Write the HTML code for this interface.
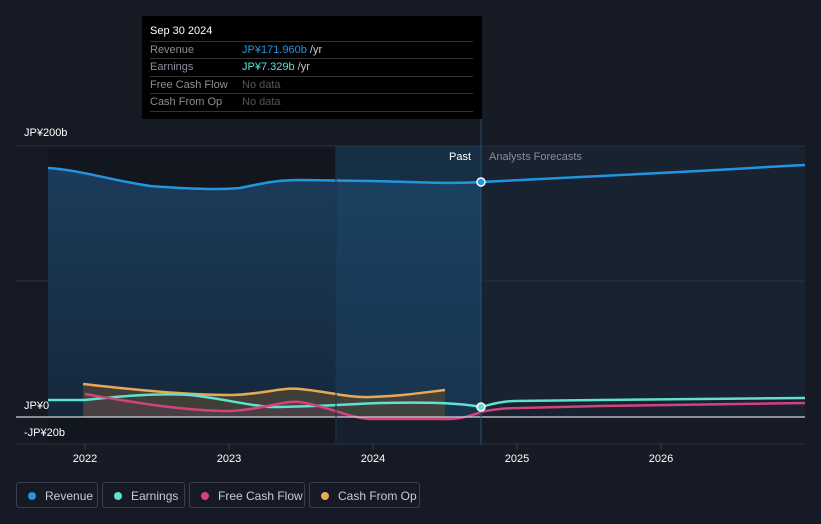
<!DOCTYPE html><html><head><meta charset="utf-8"><style>
body{margin:0;background:#151a24;font-family:"Liberation Sans",sans-serif;}
.w{position:relative;width:821px;height:524px;overflow:hidden;background:#151a24}
.tt{position:absolute;left:142px;top:16px;width:340px;height:103px;background:#000;font-size:11px;color:#8a8f98}
.tt .h{position:absolute;left:8px;top:9px;color:#fff;font-size:11px}
.tt .r{position:absolute;left:8px;width:323px;height:17px;border-top:1px solid #333;line-height:17px}
.tt .r span{position:absolute;left:92px}
.lg{position:absolute;top:482px;height:26px;border:1px solid #3a3f4a;border-radius:3px;color:#c8ccd3;font-size:12px;line-height:26px;box-sizing:border-box}
.lg i{position:absolute;left:11px;top:9px;width:8px;height:8px;border-radius:50%}
.lg b{font-weight:normal;position:absolute;left:28px}
</style></head><body><div class="w">
<svg width="821" height="524" style="position:absolute;left:0;top:0">
<defs><linearGradient id="g" x1="0" y1="0" x2="0" y2="1"><stop offset="0" stop-color="#1a3c5a"/><stop offset="1" stop-color="#16283b"/></linearGradient></defs>
<rect x="48" y="146" width="433" height="298" fill="#12171f"/>
<rect x="336" y="146" width="145" height="298" fill="#15202c"/>
<rect x="481" y="146" width="324" height="271" fill="#182230"/>
<line x1="16" y1="146" x2="805" y2="146" stroke="#2c3340"/>
<line x1="16" y1="281" x2="805" y2="281" stroke="#2c3340"/>
<line x1="16" y1="444" x2="805" y2="444" stroke="#2c3340"/>
<path d="M48,168 C80,170 110,180 150,186 C190,189 220,190 240,188 C260,184 275,180 300,180 L370,181 C420,182 450,184 481,182 L481,417 L48,417Z" fill="url(#g)"/>
<path d="M336,146 L481,146 L481,417 L336,417Z" fill="#1d4d74" opacity="0.35"/>
<path d="M83,384 C120,388 180,395 230,395 C260,395 280,387 300,389 C330,392 350,398 370,397 C400,396 420,393 445,390 L445,417 L83,417Z" fill="#4a4536" opacity="0.8"/>
<path d="M85,394 C120,400 180,411 230,411 C260,410 285,400 300,402 C330,407 350,418 370,419 L450,419 C460,419 470,416 481,412 L481,417 L85,417Z" fill="#4d3f4a" opacity="0.6"/>
<path d="M48,168 C80,170 110,180 150,186 C190,189 220,190 240,188 C260,184 275,180 300,180 L370,181 C420,182 450,184 481,182 C520,180 600,176 680,172 C740,169 780,166 805,165" fill="none" stroke="#2394e0" stroke-width="2.5"/>
<path d="M83,384 C120,388 180,395 230,395 C260,395 280,387 300,389 C330,392 350,398 370,397 C400,396 420,393 445,390" fill="none" stroke="#e8a85a" stroke-width="2.5"/>
<path d="M48,400 L85,400 C120,396 160,393 190,395 C220,398 245,405 270,407 C310,407 350,404 380,403 C430,402 460,403 481,407 C495,403 505,401 515,401 L600,400 L805,398" fill="none" stroke="#5fe0d0" stroke-width="2.5"/>
<path d="M85,394 C120,400 180,411 230,411 C260,410 285,400 300,402 C330,407 350,418 370,419 L450,419 C460,419 470,416 481,412 C495,409 505,408 520,408 L600,406 L805,403" fill="none" stroke="#d2437e" stroke-width="2.5"/>
<line x1="16" y1="417" x2="805" y2="417" stroke="#d0d3d8" stroke-width="1.2"/>
<line x1="481" y1="119" x2="481" y2="444" stroke="#2a5070"/>
<line x1="336" y1="146" x2="336" y2="444" stroke="#1e3347"/>
<circle cx="481" cy="182" r="4" fill="#2394e0" stroke="#fff" stroke-width="1.5"/>
<circle cx="481" cy="407" r="4" fill="#5fe0d0" stroke="#fff" stroke-width="1.5"/>
<g stroke="#3a3f4a"><line x1="85" y1="444" x2="85" y2="450"/><line x1="229" y1="444" x2="229" y2="450"/><line x1="373" y1="444" x2="373" y2="450"/><line x1="517" y1="444" x2="517" y2="450"/><line x1="661" y1="444" x2="661" y2="450"/></g>
<g font-family="Liberation Sans" font-size="11" fill="#fff">
<text x="24" y="136">JP¥200b</text><text x="24" y="409">JP¥0</text><text x="24" y="436">-JP¥20b</text>
<text x="449" y="160">Past</text><text x="489" y="160" fill="#8a8f98">Analysts Forecasts</text>
<g text-anchor="middle"><text x="85" y="462">2022</text><text x="229" y="462">2023</text><text x="373" y="462">2024</text><text x="517" y="462">2025</text><text x="661" y="462">2026</text></g>
</g></svg>
<div class="tt"><div class="h">Sep 30 2024</div>
<div class="r" style="top:25px">Revenue<span style="color:#2394e0">JP¥171.960b <span style="position:static;color:#ccc">/yr</span></span></div>
<div class="r" style="top:42px">Earnings<span style="color:#5fe0d0">JP¥7.329b <span style="position:static;color:#ccc">/yr</span></span></div>
<div class="r" style="top:60px">Free Cash Flow<span style="color:#555">No data</span></div>
<div class="r" style="top:77px">Cash From Op<span style="color:#555">No data</span></div>
<div class="r" style="top:95px;height:0"></div></div>
<div class="lg" style="left:16px;width:82px"><i style="background:#2394e0"></i><b>Revenue</b></div>
<div class="lg" style="left:102px;width:83px"><i style="background:#5fe0d0"></i><b>Earnings</b></div>
<div class="lg" style="left:189px;width:116px"><i style="background:#d2437e"></i><b>Free Cash Flow</b></div>
<div class="lg" style="left:309px;width:111px"><i style="background:#e8a85a"></i><b>Cash From Op</b></div>
</div></body></html>
